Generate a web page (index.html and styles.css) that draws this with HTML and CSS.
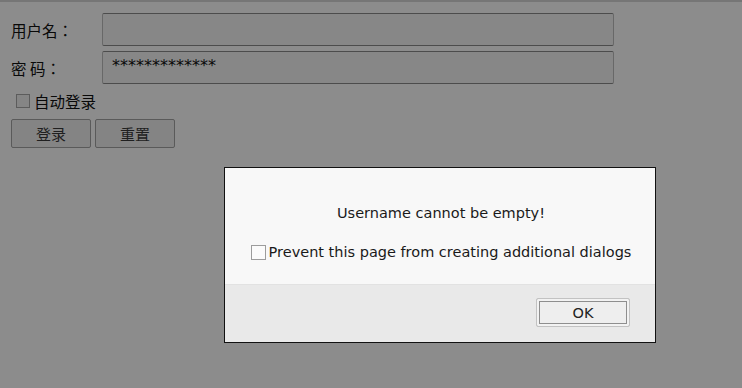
FILE: index.html
```html
<!DOCTYPE html>
<html>
<head>
    <title>登录</title>
    <link rel="stylesheet" href="styles.css">
</head>
<body>
    <form class="login-form" onsubmit="return false;">
        <div class="row">
            <label class="field-label">用户名：</label>
            <input class="field" type="text" name="username">
        </div>
        <div class="row">
            <label class="field-label">密 码：</label>
            <div class="field field-pass">*************</div>
        </div>
        <div class="remember">
            <span class="box"></span>自动登录
        </div>
        <div class="buttons">
            <button class="btn" type="submit">登录</button>
            <button class="btn" type="reset">重置</button>
        </div>
    </form>

    <div class="overlay"></div>

    <!-- alert dialog -->
    <div class="dialog">
        <div class="dialog-body">
            <p class="message">Username cannot be empty!</p>
            <div class="prevent"><span class="box box-light"></span>Prevent this page from creating additional dialogs</div>
        </div>
        <div class="dialog-footer">
            <button class="ok-button">OK</button>
        </div>
    </div>
</body>
</html>
```

FILE: styles.css
```css
body {
    margin: 0;
    height: 388px;
    background-color: #ffffff;
    border-top: 2px solid #d8d8d8;
    box-sizing: border-box;
    font-family: "Noto Sans CJK TC", "DejaVu Sans", sans-serif;
    font-size: 15.5px;
    color: #111;
    overflow: hidden;
}

.login-form {
    padding: 11px 0 0 11px;
}

.row {
    display: flex;
    align-items: center;
    margin-bottom: 5px;
}

.field-label {
    width: 91px;
    white-space: pre;
}

.field {
    width: 512px;
    height: 33px;
    box-sizing: border-box;
    border: 1px solid #bdbdbd;
    border-top-color: #8a8a8a;
    border-bottom-color: #8a8a8a;
    border-radius: 2px;
    background-color: #f6f6f6;
    margin: 0;
    padding: 0 9px;
    font-family: "DejaVu Sans", sans-serif;
    font-size: 16px;
}

.field-pass {
    display: flex;
    align-items: center;
    line-height: 1;
    padding-bottom: 4px;
}

.remember {
    display: flex;
    align-items: center;
    margin: 4px 0 0 5px;
    height: 24px;
}

.box {
    display: inline-block;
    width: 12px;
    height: 12px;
    border: 1px solid #a8a8a8;
    background-color: #f2f2f2;
    margin-right: 4px;
}

.buttons {
    display: flex;
    gap: 4px;
    margin-top: 6px;
}

.btn {
    width: 80px;
    height: 29px;
    border: 1px solid #a4a4a4;
    border-radius: 2px;
    background-color: #f0f0f0;
    font-family: "Noto Sans CJK TC", sans-serif;
    font-size: 15px;
    color: #3a3a3a;
    padding: 0;
}

.overlay {
    position: absolute;
    top: 0;
    left: 0;
    width: 100%;
    height: 100%;
    background-color: rgba(0, 0, 0, 0.45);
}

.dialog {
    position: absolute;
    left: 224px;
    top: 167px;
    width: 432px;
    height: 176px;
    box-sizing: border-box;
    border: 1px solid #111;
    background-color: #f8f8f8;
    font-family: "DejaVu Sans", sans-serif;
    font-size: 14.5px;
    color: #1a1a1a;
    display: flex;
    flex-direction: column;
}

.dialog-body {
    height: 116px;
    display: flex;
    flex-direction: column;
    align-items: center;
}

.message {
    margin: 37px 0 0 0;
    padding-left: 2px;
}

.prevent {
    display: flex;
    align-items: center;
    margin-top: 23px;
    padding-left: 2px;
}

.box-light {
    width: 13px;
    height: 13px;
    border-color: #9c9c9c;
    background-color: #fbfbfb;
    margin-right: 3px;
}

.dialog-footer {
    flex: 1;
    background-color: #e9e9e9;
    border-top: 1px solid #e2e2e2;
    display: flex;
    justify-content: flex-end;
    align-items: center;
    padding-right: 25px;
}

.ok-button {
    width: 94px;
    height: 29px;
    border: 1px solid #c2c2c2;
    border-radius: 2px;
    background-color: #eeeeee;
    box-shadow: inset 0 0 0 2px #f2f2f2, inset 0 0 0 3px #8e8e8e;
    font-family: "DejaVu Sans", sans-serif;
    font-size: 14.5px;
    color: #222;
    padding: 0;
    margin-bottom: 2px;
}
```
